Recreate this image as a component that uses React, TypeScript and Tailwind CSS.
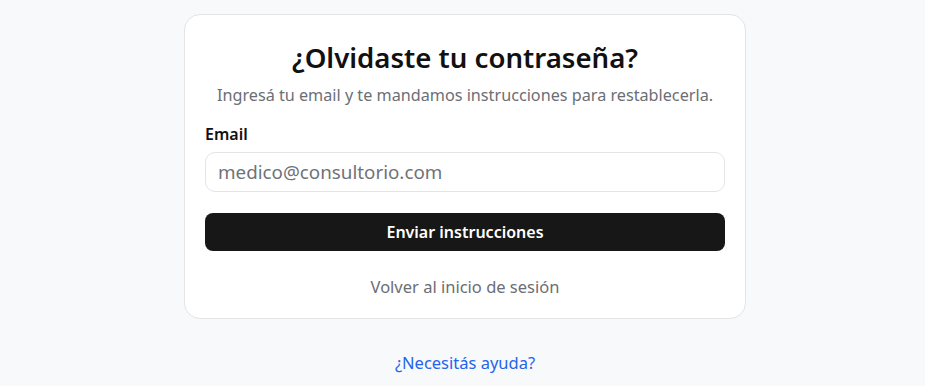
export default function App() {
  return (
    <main
      className="flex min-h-screen flex-col items-center bg-[#f8f9fb] pt-[14px] pl-[5px]"
      style={{ fontFamily: '"Noto Sans", "Open Sans", sans-serif' }}
    >
      <div className="w-[562px] rounded-2xl border border-[#e2e4e8] bg-white px-5 pt-[22px] pb-[19px]">
        <h1 className="text-center text-[27.6px] font-semibold leading-[40px] text-[#111]">¿Olvidaste tu contraseña?</h1>
        <p className="mt-[6px] text-center text-[16.2px] leading-6 text-[#6b6e75]">
          Ingresá tu email y te mandamos instrucciones para restablecerla.
        </p>

        <form className="mt-[15px]">
          <label className="block">
            <span className="block text-[16px] font-semibold leading-6 text-[#111]">Email</span>
            <input
              type="email"
              placeholder="medico@consultorio.com"
              className="mt-[6px] h-[40px] w-full rounded-[10px] border border-[#e2e4e8] px-3 text-[18.8px] text-[#111] outline-none placeholder:text-[#6f7279]"
            />
          </label>
          <button
            type="button"
            className="mt-[21px] h-[38px] w-full rounded-lg bg-[#171717] text-[16px] font-semibold text-white"
          >
            Enviar instrucciones
          </button>
        </form>

        <div className="mt-[24px] text-center">
          <a href="#" className="text-[16.5px] leading-6 text-[#6b6e75]">
            Volver al inicio de sesión
          </a>
        </div>
      </div>

      <a href="#" className="mt-[32px] text-[16.5px] leading-6 text-[#2563eb]">
        ¿Necesitás ayuda?
      </a>
    </main>
  );
}
